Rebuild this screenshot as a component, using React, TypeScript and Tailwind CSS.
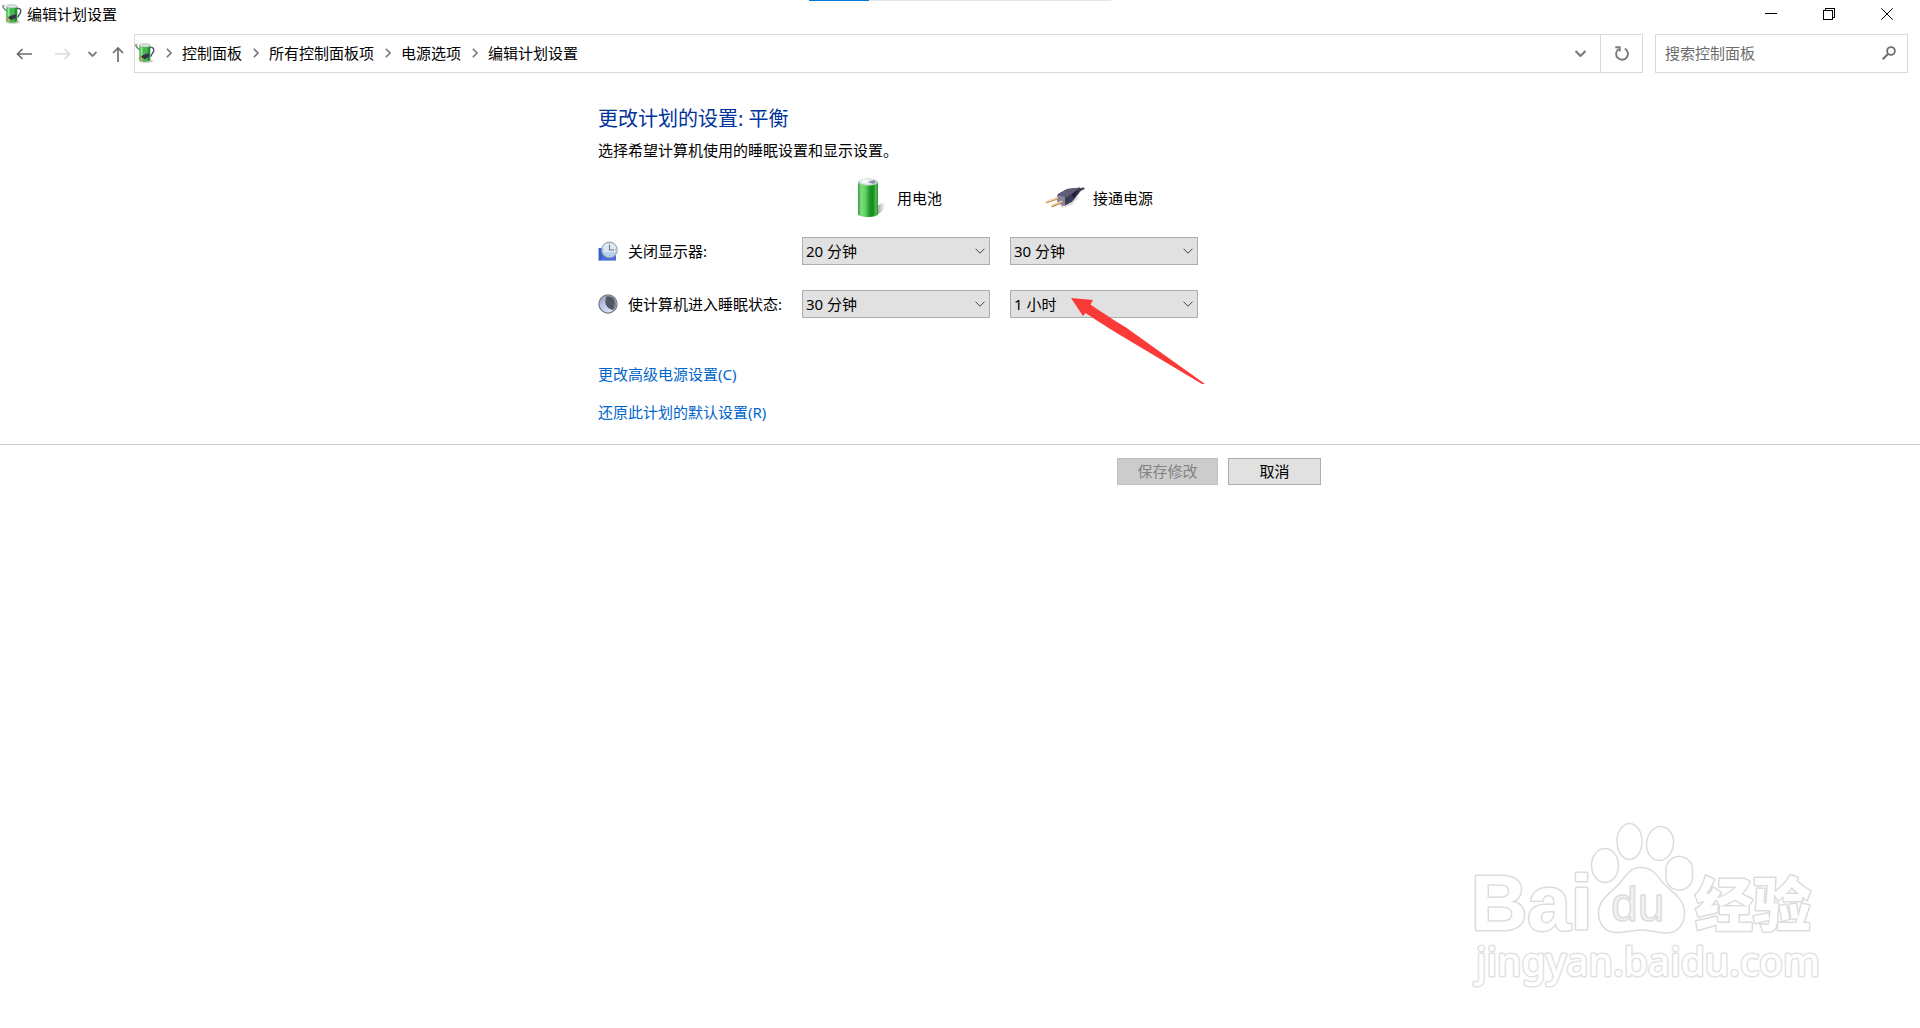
import { useState, type ReactNode } from "react";

interface PlanRow {
    id: string;
    label: string;
    icon: ReactNode;
    battery: string;
    plugged: string;
}

const CRUMBS = ["控制面板", "所有控制面板项", "电源选项", "编辑计划设置"];
const TIMES = ["1 分钟", "5 分钟", "10 分钟", "20 分钟", "30 分钟", "1 小时", "2 小时", "从不"];

const ROWS: PlanRow[] = [
    { id: "display", label: "关闭显示器:", icon: <DisplayIcon />, battery: "20 分钟", plugged: "30 分钟" },
    { id: "sleep", label: "使计算机进入睡眠状态:", icon: <MoonIcon />, battery: "30 分钟", plugged: "1 小时" },
];

function PowerIcon() {
    return (
        <svg className="w-5 h-5 shrink-0" viewBox="0 0 20 20" fill="none">
            <ellipse cx="11" cy="18" rx="7" ry="1.8" fill="#c9c9c9" />
            <path d="M0.8 1.2C0.6 4 2.5 5.2 5.5 7.5" stroke="#6f7284" strokeWidth="1.3" />
            <path d="M0.3 2.8L2.8 1" stroke="#8b8e9c" strokeWidth="0.9" />
            <path d="M15 4.500c3-.6 4.200 1.200 3.700 3.400-.5 2.300-2.400 3.200-2.900 5.600" stroke="#4d4d70" strokeWidth="1.4" />
            <path d="M4.2 2.4v14.400c0 2.600 11 2.600 11 0V2.400z" fill="#45b84d" />
            <path d="M5.600 3v15l2 .5V3z" fill="#8be88e" />
            <path d="M12.800 3v15.200l2.400-1.200V3z" fill="#238a2e" />
            <ellipse cx="9.7" cy="2.4" rx="5.5" ry="1.7" fill="#dfe3e8" stroke="#7fae85" strokeWidth="0.6" />
            <path d="M5.500 13.500l5.500-3.300 3.300.8-.8 3.200-4.500 2.300z" fill="#343447" />
            <path d="M7.800 11.800l4.200-1.600" stroke="#8b8ba0" strokeWidth="0.7" />
            <path d="M7 13.800l-3.400 2M8.800 15.500l-3.200 2" stroke="#c98d4f" strokeWidth="1.200" />
        </svg>
    );
}

function BatteryIcon() {
    return (
        <svg className="w-10 h-10 shrink-0" viewBox="0 0 40 40">
            <defs>
                <linearGradient id="cell" x1="0" x2="1">
                    <stop offset="0" stopColor="#2f9a35" />
                    <stop offset="0.15" stopColor="#7fdc7f" />
                    <stop offset="0.35" stopColor="#62d565" />
                    <stop offset="0.6" stopColor="#1d9427" />
                    <stop offset="0.75" stopColor="#128a1c" />
                    <stop offset="0.9" stopColor="#52bd55" />
                    <stop offset="1" stopColor="#2b8b31" />
                </linearGradient>
                <linearGradient id="cellShadow" x1="0" x2="1">
                    <stop offset="0" stopColor="#909090" />
                    <stop offset="1" stopColor="#ffffff" />
                </linearGradient>
            </defs>
            <path d="M28 28c4-3 8-4 8-1 0 4-4 8-9 10z" fill="url(#cellShadow)" />
            <path d="M9 4v32c0 4 20 4 20 0V4z" fill="url(#cell)" />
            <ellipse cx="19" cy="4.2" rx="10" ry="3.6" fill="#a9cfac" />
            <ellipse cx="19" cy="3.8" rx="8.6" ry="2.9" fill="#e9ebf2" />
            <path d="M19 4l6-2 2.4 1.8-3.4 2.3z" fill="#8f8fa8" />
            <ellipse cx="16" cy="3" rx="3" ry="1.4" fill="#ffffff" />
        </svg>
    );
}

function PlugIcon() {
    return (
        <svg className="w-10 h-10 shrink-0" viewBox="0 0 40 40">
            <path d="M14 27l3 3 10-3 8-9z" fill="#dddde2" />
            <path d="M34 10.5l5-1.2.8 1.6-5 2.6z" fill="#4b4b4b" />
            <path d="M13 16L22 11l13-1.600 1.400 2.400c-3 5-7 9.200-9.600 12.200L20 27.500l-7-4z" fill="#3c3c55" />
            <path d="M13 16l9.500-5 12-1.200-8 6.500-6.500 3.700z" fill="#5d5d7a" />
            <path d="M12 16.500l8 2.500v8.500l-2 .5-6-4.500z" fill="#84849c" />
            <path d="M26 16.500l8-5.500-5 9z" fill="#20203a" />
            <path d="M12.500 19L0.500 23.500l.8 2L13 21.500z" fill="#c99660" />
            <path d="M12.500 19L0.500 23.500l.3 1 12-4.300z" fill="#f9e0bd" />
            <path d="M17 22.500L6 27.500l1 2 11-4.700z" fill="#c08449" />
            <path d="M17 22.500L6 27.500l.4 1 11-4.800z" fill="#f5d8ae" />
        </svg>
    );
}

function DisplayIcon() {
    return (
        <svg className="w-5 h-5 shrink-0" viewBox="0 0 20 20">
            <path d="M1 7l17 5v7.500H1z" fill="#4a6fdc" />
            <path d="M1 7h3v12.500H1z" fill="#3a5fce" />
            <path d="M0.500 7v12.500H18" fill="none" stroke="#8fa3d8" strokeWidth="0.800" />
            <circle cx="11.500" cy="8.800" r="8.300" fill="#a4acb7" />
            <circle cx="11.500" cy="8.800" r="7.100" fill="#dceaf6" />
            <path d="M4.800 11a7.100 7.100 0 0013.300 0z" fill="#b7d3ec" />
            <path d="M11.500 4v5h4.500" fill="none" stroke="#6b7584" strokeWidth="1.100" />
            <path d="M11.500 2.200v1M11.500 14.500v1M5 8.800h1M17 8.800h1" stroke="#7b8594" strokeWidth="0.900" />
        </svg>
    );
}

function MoonIcon() {
    return (
        <svg className="w-5 h-5 shrink-0" viewBox="0 0 20 20">
            <defs>
                <linearGradient id="moon" x1="0" y1="0" x2="0.6" y2="1">
                    <stop offset="0" stopColor="#8d98b3" />
                    <stop offset="0.500" stopColor="#b9c6e8" />
                    <stop offset="1" stopColor="#d9e2f7" />
                </linearGradient>
            </defs>
            <circle cx="10" cy="10" r="9.700" fill="#777a80" />
            <circle cx="10" cy="10" r="8.400" fill="url(#moon)" />
            <path d="M8.500 2.500c5-1.300 9.300 2.500 9.300 7.500 0 2.500-1 4.500-2.800 6C10 15 7.500 11.500 7.300 8c0-2 .4-4 1.200-5.500z" fill="#555862" />
            <path d="M15 16c1.800-1.500 2.900-3.500 2.900-6 0-2-.7-3.800-1.900-5.200.8 4 .3 8-1 11.200z" fill="#85888f" />
        </svg>
    );
}

function Chevron({ className }: { className: string }) {
    return (
        <svg className={className} viewBox="0 0 10 6" fill="none" stroke="currentColor">
            <path d="M0.500 0.700L5 5.200L9.500 0.700" />
        </svg>
    );
}

function Combo({ label, initial }: { label: string; initial: string }) {
    const [value, setValue] = useState(initial);

    return (
        <div className="relative">
            <select
                aria-label={label}
                value={value}
                onChange={(e) => setValue(e.target.value)}
                className="block w-full h-7 appearance-none border border-[#adadad] bg-[#e1e1e1] pl-[3px] pr-6 text-[15px] leading-6 text-black"
            >
                {TIMES.map((time) => (
                    <option key={time}>{time}</option>
                ))}
            </select>
            <Chevron className="pointer-events-none absolute right-[5px] top-[11px] w-[10px] h-[6px] text-[#444444]" />
        </div>
    );
}

function TitleBar() {
    return (
        <header className="flex h-7 items-center pl-0.5 pr-1">
            <PowerIcon />
            <h1 className="ml-[5px] flex-1 text-[15px] leading-6">编辑计划设置</h1>
            <button aria-label="最小化" className="flex w-[58px] h-7 items-center justify-center">
                <svg className="w-3 h-3" viewBox="0 0 12 12" shapeRendering="crispEdges">
                    <path d="M0 5.500h12" stroke="#000" />
                </svg>
            </button>
            <button aria-label="还原" className="flex w-[58px] h-7 items-center justify-center">
                <svg className="w-3 h-3" viewBox="0 0 12 12" fill="none" stroke="#000" shapeRendering="crispEdges">
                    <path d="M0.500 2.500h9v9h-9zM2.500 2.500v-2h9v9h-2" />
                </svg>
            </button>
            <button aria-label="关闭" className="flex w-[58px] h-7 items-center justify-center">
                <svg className="w-3 h-3" viewBox="0 0 12 12" fill="none" stroke="#000">
                    <path d="M0.300 0.300l11.400 11.400M11.700 0.300L0.300 11.700" />
                </svg>
            </button>
        </header>
    );
}

function AddressBar() {
    return (
        <nav className="mt-1.5 flex h-[39px] items-stretch pr-3">
            <button aria-label="后退" className="flex w-[47px] items-center justify-center text-[#6e6e6e]">
                <svg className="w-4 h-3" viewBox="0 0 16 12" fill="none" stroke="currentColor" strokeWidth="1.700">
                    <path d="M16 6H1.500M6.500 1L1.500 6l5 5" />
                </svg>
            </button>
            <button aria-label="前进" disabled className="flex w-8 items-center justify-center text-[#dadada]">
                <svg className="w-4 h-3" viewBox="0 0 16 12" fill="none" stroke="currentColor" strokeWidth="1.700">
                    <path d="M0 6h14.500M9.500 1l5 5-5 5" />
                </svg>
            </button>
            <button aria-label="最近浏览的位置" className="flex w-[27px] items-center justify-center text-[#7a7a7a]">
                <Chevron className="w-[9px] h-[6px] stroke-2" />
            </button>
            <button aria-label="上移" className="mr-[5px] flex w-[23px] items-center justify-center text-[#6e6e6e]">
                <svg className="w-3 h-4" viewBox="0 0 12 16" fill="none" stroke="currentColor" strokeWidth="1.700">
                    <path d="M6 16V2M1 7l5-5 5 5" />
                </svg>
            </button>
            <div className="flex flex-1 border border-[#d9d9d9]">
                <div className="flex flex-1 items-center pb-0.5">
                    <PowerIcon />
                    {CRUMBS.map((crumb) => (
                        <div key={crumb} className="flex items-center">
                            <span className="flex w-[27px] justify-center text-[#7a7a7a]">
                                <svg className="w-[6px] h-[10px]" viewBox="0 0 6 10" fill="none" stroke="currentColor" strokeWidth="1.600">
                                    <path d="M0.800 0.800L5 5L0.800 9.200" />
                                </svg>
                            </span>
                            <button className="text-[15px] leading-6 whitespace-nowrap">{crumb}</button>
                        </div>
                    ))}
                </div>
                <button aria-label="以前的位置" className="flex w-10 items-center justify-center text-[#7a7a7a]">
                    <Chevron className="w-[11px] h-[7px] stroke-2" />
                </button>
                <button aria-label="刷新" className="flex w-[42px] items-center justify-center border-l border-[#d9d9d9] text-[#7a7a7a]">
                    <svg className="w-[14px] h-[15px]" viewBox="0 0 14 15" fill="none" stroke="currentColor" strokeWidth="1.900">
                        <path d="M9.800 2.600A5.900 5.900 0 1 1 3.600 3" />
                        <path d="M0.300 1.300h4.400v4.300" />
                    </svg>
                </button>
            </div>
            <div className="ml-3 flex w-[253px] items-center border border-[#d9d9d9] pb-0.5 pl-[9px] pr-[11px]">
                <input
                    type="text"
                    aria-label="搜索控制面板"
                    placeholder="搜索控制面板"
                    className="min-w-0 flex-1 text-[15px] leading-6 outline-none placeholder:text-[#6d6d6d]"
                />
                <svg className="w-[14px] h-[14px] text-[#6e6e6e]" viewBox="0 0 14 14" fill="none" stroke="currentColor">
                    <circle cx="9" cy="5" r="3.900" strokeWidth="1.800" />
                    <path d="M6.200 7.800L0.700 13.300" strokeWidth="2" />
                </svg>
            </div>
        </nav>
    );
}

function PointerArrow() {
    return (
        <svg className="pointer-events-none absolute left-[61px] top-2 w-[134px] h-[87px]" viewBox="0 0 134 87">
            <path d="M0 0L22 2L19.500 6.500C24 10 40 20 55 29.500L134 86L131 86L49 37C35 28.500 22 20 14.500 15L12 18z" fill="#fb3a38" />
        </svg>
    );
}

function Watermark() {
    return (
        <svg
            className="pointer-events-none absolute bottom-7 right-20 w-[380px] h-[200px]"
            viewBox="0 0 380 200"
            fill="#ffffff"
            stroke="#dcdcdc"
            strokeWidth="1.500"
            strokeLinejoin="round"
        >
            <text x="11" y="130" fontFamily="Liberation Sans, sans-serif" fontWeight="700" fontSize="78" strokeWidth="3" paintOrder="stroke">Bai</text>
            <ellipse cx="145" cy="65.500" rx="13.500" ry="17" />
            <ellipse cx="169.500" cy="41.500" rx="12.500" ry="18" />
            <ellipse cx="200" cy="43.500" rx="13.500" ry="17" transform="rotate(8 200 43.500)" />
            <rect x="206" y="56.500" width="26.500" height="33.500" rx="13" />
            <path d="M181 67.500c10 0 14 5 20 13 7 9 23 17 23.500 31 .5 13-7 21-17 21.500-8 .5-17-3-26-3s-17 3-26 2.500c-11-.5-17-9-17-20 0-14 16-22 23-31.500 6-8 10-13.500 19.500-13.500z" />
            <text x="151" y="121" fontFamily="Liberation Sans, sans-serif" fontSize="48" fill="#f2f2f2">du</text>
            <text x="235" y="126" fontFamily="Noto Sans CJK SC, sans-serif" fontWeight="900" fontSize="58" strokeWidth="3" paintOrder="stroke">经验</text>
            <text x="16" y="176" fontFamily="Noto Sans, sans-serif" fontWeight="500" fontSize="39" stroke="#e2e2e2" strokeWidth="3" paintOrder="stroke">jingyan.baidu.com</text>
        </svg>
    );
}

export default function App() {
    return (
        <div className="relative min-h-screen overflow-hidden bg-white font-['Noto_Sans','Noto_Sans_CJK_SC',sans-serif] text-[15px] text-black">
            {/* Capture strip over the top edge */}
            <div className="absolute inset-x-0 top-0 flex justify-center">
                <div className="flex w-[302px] h-px bg-[#e5e5e5]">
                    <div className="w-[60px] bg-[#0078d7]" />
                </div>
            </div>

            <TitleBar />
            <AddressBar />

            <main>
                <section className="mx-auto max-w-[724px] pt-8 pb-5">
                    <h2 className="text-[20px] leading-7 text-[#003399]">更改计划的设置: 平衡</h2>
                    <p className="mt-[5px] leading-6">选择希望计算机使用的睡眠设置和显示设置。</p>

                    <div className="mt-4 grid grid-cols-[184px_188px_188px] gap-x-5">
                        <div className="col-start-2 flex items-center gap-2 pl-[47px]">
                            <BatteryIcon />
                            <span>用电池</span>
                        </div>
                        <div className="flex items-center gap-2 pl-[35px]">
                            <PlugIcon />
                            <span>接通电源</span>
                        </div>
                    </div>

                    <div className="mt-[19px] flex flex-col gap-[25px]">
                        {ROWS.map((row) => (
                            <div key={row.id} className="grid grid-cols-[184px_188px_188px] items-center gap-x-5">
                                <div className="flex items-center gap-[10px] whitespace-nowrap">
                                    {row.icon}
                                    <span>{row.label}</span>
                                </div>
                                <Combo label={`${row.label} 用电池`} initial={row.battery} />
                                <div className="relative">
                                    <Combo label={`${row.label} 接通电源`} initial={row.plugged} />
                                    {row.id === "sleep" && <PointerArrow />}
                                </div>
                            </div>
                        ))}
                    </div>

                    <div className="mt-11 flex flex-col items-start gap-[14px] leading-6 text-[#0066cc]">
                        <a href="#advanced">更改高级电源设置(C)</a>
                        <a href="#restore">还原此计划的默认设置(R)</a>
                    </div>
                </section>

                <div className="border-t border-[#cccccc] pt-[13px]">
                    <div className="mx-auto flex max-w-[724px] justify-end gap-[10px] pr-px">
                        <button disabled className="w-[101px] h-[27px] border border-[#bfbfbf] bg-[#cccccc] pb-0.5 leading-[22px] text-[#838383]">
                            保存修改
                        </button>
                        <button className="w-[93px] h-[27px] border border-[#adadad] bg-[#e1e1e1] pb-0.5 leading-[22px]">取消</button>
                    </div>
                </div>
            </main>

            <Watermark />
        </div>
    );
}
